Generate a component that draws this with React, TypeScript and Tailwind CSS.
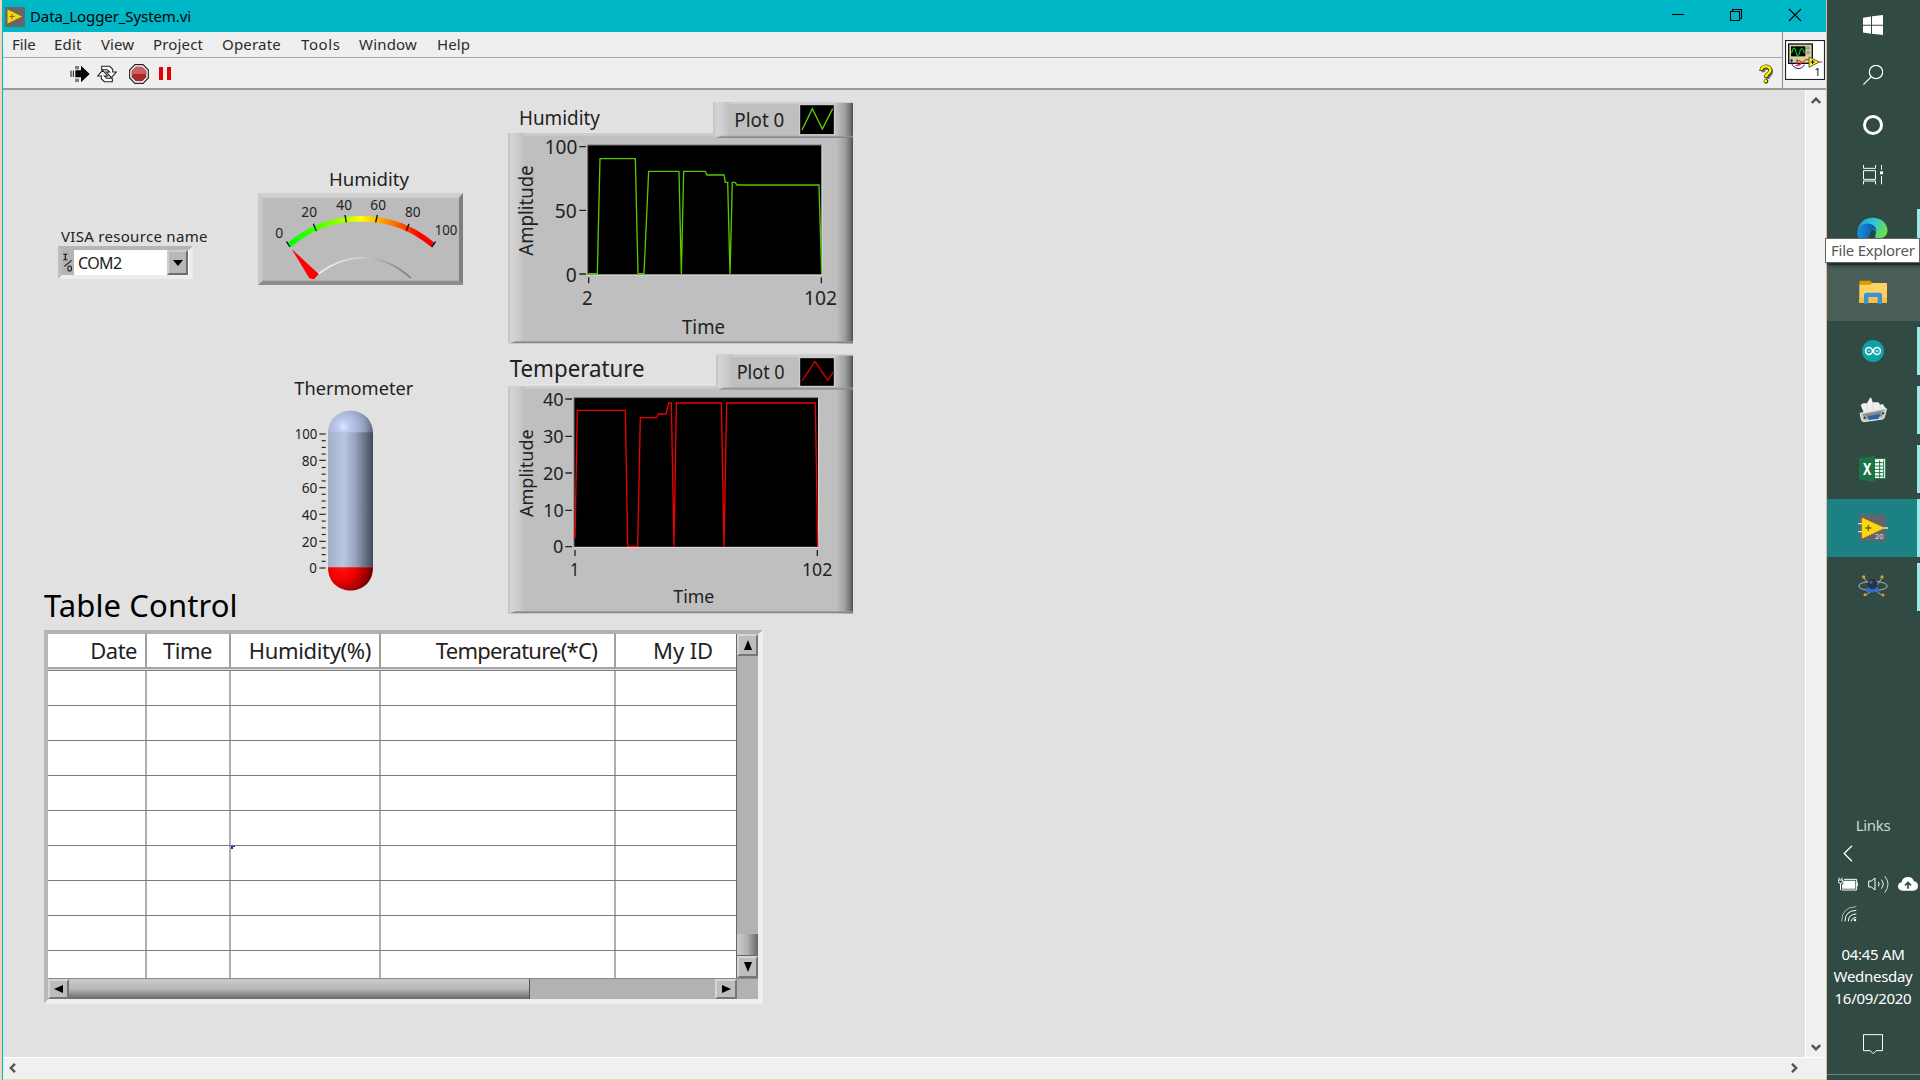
import React from "react";

const FONT = "font-['Noto_Sans','Open_Sans',sans-serif]";

type LabelProps = {
  x: number;
  y: number;
  w: number;
  size: number;
  children: string;
  rotate?: boolean;
  fill?: string;
};

/* Text on a drawing, fitted to a fixed advance width. x,y = left baseline. */
function Label({ x, y, w, size, children, rotate, fill = "#222" }: LabelProps) {
  return (
    <text
      x={x}
      y={y}
      fontSize={size}
      textLength={w}
      lengthAdjust="spacingAndGlyphs"
      fill={fill}
      transform={rotate ? `rotate(-90 ${x} ${y})` : undefined}
    >
      {children}
    </text>
  );
}

const MENU: { name: string; cls: string }[] = [
  { name: "File", cls: "w-[42px] tracking-[-0.1px]" },
  { name: "Edit", cls: "w-[47px] tracking-[0.2px]" },
  { name: "View", cls: "w-[52px] tracking-[0.1px]" },
  { name: "Project", cls: "w-[69px] tracking-[0.15px]" },
  { name: "Operate", cls: "w-[79px] tracking-[0.2px]" },
  { name: "Tools", cls: "w-[58px] tracking-[0.6px]" },
  { name: "Window", cls: "w-[78px] tracking-[0.2px]" },
  { name: "Help", cls: "w-[40px] tracking-[0.1px]" },
];

function TitleBar() {
  return (
    <header className="flex h-8 shrink-0 items-center bg-[#00b7c7] pl-[2px]">
      <svg className="mt-px h-5 w-5" viewBox="0 0 20 20">
        <rect width="20" height="20" fill="#666" />
        <path d="M2.5 2.5 17 9.5 2.5 16.5Z" fill="#ffd500" />
        <path d="M4.5 9.5h5M7 7v5" stroke="#666" strokeWidth="1.1" />
      </svg>
      <span className="ml-[5px] text-[15px] tracking-[-0.1px] text-black">Data_Logger_System.vi</span>
      <svg className="ml-auto mr-[22px] h-8 w-[132px]" viewBox="0 0 132 32" fill="none" stroke="#000" strokeWidth="1.1">
        <path d="M0 14.5h12" />
        <path d="M58.5 11.5h9v9h-9zM60.500 11.500v-2h9v9h-2" />
        <path d="m117 9 12 12M129 9l-12 12" />
      </svg>
    </header>
  );
}

function ViIcon() {
  return (
    <svg className="h-10 w-10" viewBox="435 118 120 120">
      <rect x="436.500" y="119.500" width="117" height="117" fill="#fff" stroke="#222" strokeWidth="3.500" />
      <rect x="446" y="130" width="71" height="58" fill="#d6d09c" stroke="#111" strokeWidth="4" />
      <rect x="453" y="137" width="43" height="30" fill="#000" />
      <path d="M455 158c4-20 10-20 13-4s8 12 11 0 9-16 14 4" fill="none" stroke="#00c832" strokeWidth="3.500" />
      <circle cx="504" cy="142" r="4" fill="none" stroke="#777" strokeWidth="2.500" />
      <circle cx="504" cy="156" r="4" fill="none" stroke="#777" strokeWidth="2.500" />
      <path d="M450 179h9M455 175v12M471 176v6" stroke="#1a1a99" strokeWidth="3" />
      <path d="M455 188c6 20 32 20 38 4" fill="none" stroke="#1a1a99" strokeWidth="3" />
      <circle cx="477" cy="186" r="6.500" fill="none" stroke="#e11" strokeWidth="3" />
      <path d="M466 195h10L497 177h12M538 184h9" fill="none" stroke="#e11" strokeWidth="3" />
      <path d="M507 169v31l31-16z" fill="#ffec1a" stroke="#444" strokeWidth="2.500" />
      <path d="M512 184h12M518 178v12" stroke="#111" strokeWidth="3" />
      <text x="523" y="227" fontSize="34" fill="#111">1</text>
    </svg>
  );
}

function Toolbar() {
  return (
    <div className="flex h-[58px] shrink-0 border-b-2 border-[#9a9a9a] bg-[#efefef]">
      <div className="flex flex-1 flex-col">
        <nav className="flex h-[26px] items-center border-b border-[#a8a8a8] pl-[9px] text-[15px] text-[#2c2c2c]">
          {MENU.map((m) => (
            <span key={m.name} className={m.cls + " pb-px"}>
              {m.name}
            </span>
          ))}
        </nav>
        <div className="flex flex-1 items-center pl-[67px] pt-px">
          <svg className="h-5 w-5" viewBox="210 192 60 60">
            <path d="M213 212v19M220 212v19" stroke="#111" strokeWidth="3" />
            <path d="M226 211h17v-14l26 25-26 25v-15h-17z" fill="#050505" />
            <path d="M228 198v10M234 198v10M228 236v10M234 236v10" stroke="#111" strokeWidth="3" />
          </svg>
          <svg className="ml-[7px] h-5 w-5" viewBox="289 192 60 60" fill="#fff" stroke="#222" strokeWidth="3.200">
            <path d="M303 199h24l9 9v8h11l-15 17-15-17h10l-7-7h-17z" />
            <path d="M335 245h-24l-9-9v-8h-11l15-17 15 17h-10l7 7h17z" />
          </svg>
          <svg className="ml-[12px] h-5 w-5" viewBox="386 192 60 60">
            <path d="M404 194h24l16 16v24l-16 16h-24l-16-16v-24z" fill="#fff" stroke="#222" strokeWidth="3.500" />
            <path d="M406 200h20l12 12v20l-12 12h-20l-12-12v-20z" fill="#a62c2c" />
            <path d="M406 200h20l12 12v10h-44v-10z" fill="#cc5f5f" />
          </svg>
          <div className="ml-[10px] flex gap-1">
            <i className="h-[13px] w-1 bg-[#e60000]" />
            <i className="h-[13px] w-1 bg-[#e60000]" />
          </div>
          <svg className="ml-auto mr-2 h-5 w-[15px]" viewBox="358 188 45 60">
            <path d="M367 210c0-20 27-16 24 0-1 8-10 8-10 20" transform="translate(3 3)" fill="none" stroke="#777" strokeWidth="12" />
            <path d="M365 209c0-19 29-17 27 0-1 8-13 9-13 20" fill="none" stroke="#3a3a00" strokeWidth="12.500" />
            <circle cx="379" cy="240" r="7" fill="#3a3a00" />
            <path d="M365 207c0-16 29-16 27 1-1 8-13 9-13 19" fill="none" stroke="#fff200" strokeWidth="7.500" />
            <circle cx="378" cy="239" r="4.500" fill="#fff200" />
          </svg>
        </div>
      </div>
      <div className="flex w-[44px] items-center justify-center border-l border-[#8d8d8d]">
        <ViIcon />
      </div>
    </div>
  );
}

function VisaControl() {
  return (
    <div className="absolute left-[55px] top-[135px] w-[160px]">
      <div className="ml-[3px] whitespace-nowrap text-[15px] leading-[22px] tracking-[0.3px] text-[#222]">VISA resource name</div>
      <div className="-mt-px flex h-[33px] w-[135px] border-4 border-b-[#ededed] border-l-[#bdbdbd] border-r-[#ededed] border-t-[#b5b5b5] bg-white">
        <div className="w-[12px] shrink-0 bg-[#b4b4b4]">
          <svg className="h-[25px] w-[12px]" viewBox="69 270 36 75" fill="none" stroke="#111" strokeWidth="3.200">
            <path d="M73 283h12M73 299h12M79 283v16M76 319l22-18" />
            <rect x="87" y="318" width="10" height="15" rx="4" />
          </svg>
        </div>
        <span className="flex-1 pl-1 text-[16px] leading-[27px] tracking-[-0.6px] text-[#222]">COM2</span>
        <div className="mr-px flex w-[21px] items-center justify-center border-2 border-b-[#6d6d6d] border-l-[#cfcfcf] border-r-[#6d6d6d] border-t-[#cfcfcf] bg-[#b8b8b8]">
          <i className="border-x-[5px] border-t-[6px] border-x-transparent border-t-black" />
        </div>
      </div>
    </div>
  );
}

function Gauge() {
  return (
    <svg className="absolute left-[252px] top-[76px] h-[120px] w-[212px]" viewBox="645 18 636 360">
      <defs>
        <linearGradient id="scale" gradientUnits="userSpaceOnUse" x1="745" y1="0" x2="1182" y2="0">
          <stop offset="0" stopColor="#00ff00" />
          <stop offset=".2" stopColor="#4fff00" />
          <stop offset=".4" stopColor="#b4ff00" />
          <stop offset=".5" stopColor="#ffff00" />
          <stop offset=".62" stopColor="#ffae00" />
          <stop offset=".8" stopColor="#ff4200" />
          <stop offset=".9" stopColor="#ff0000" />
        </linearGradient>
        <linearGradient id="rim" x1="0" x2="1">
          <stop offset="0" stopColor="#f4f4f4" />
          <stop offset=".45" stopColor="#cfcfcf" />
          <stop offset="1" stopColor="#777" />
        </linearGradient>
      </defs>
      <Label x={867} y={78} w={240} size={54}>Humidity</Label>
      <rect x="654" y="99" width="615" height="276" fill="#bbb" />
      <path d="M654 99h615l-12 14H668z" fill="#cfcfcf" />
      <path d="M654 99l14 14v248l-14 14z" fill="#cacaca" />
      <path d="M1269 99v276l-12-14V113z" fill="#808080" />
      <path d="M654 375h615l-12-13H668z" fill="#8c8c8c" />
      <path d="M748 255A334 334 0 0 1 1179 255" fill="none" stroke="url(#scale)" strokeWidth="16" />
      <path d="m739 244 11 17M820 191l9 22M915 165l4 22M1012 165l-5 22M1107 191l-8 22M1187 245l-12 16" stroke="#111" strokeWidth="4" />
      <Label x={706} y={235} w={24} size={44}>0</Label>
      <Label x={784} y={171} w={47} size={44}>20</Label>
      <Label x={889} y={149} w={47} size={44}>40</Label>
      <Label x={991} y={149} w={47} size={44}>60</Label>
      <Label x={1095} y={171} w={47} size={44}>80</Label>
      <Label x={1184} y={224} w={68} size={44}>100</Label>
      <path d="M836 341Q900 294 965 293Q1045 293 1112 354" fill="none" stroke="url(#rim)" strokeWidth="5" />
      <path d="M755 267 836 342 822 358 808 355Z" fill="#ff0000" />
    </svg>
  );
}

const TANK_LABELS = [
  { t: "100", y: 192, x: 74, w: 68 },
  { t: "80", y: 271, x: 95, w: 47 },
  { t: "60", y: 353, x: 95, w: 47 },
  { t: "40", y: 433, x: 95, w: 47 },
  { t: "20", y: 514, x: 95, w: 47 },
  { t: "0", y: 594, x: 118, w: 23 },
];

function Thermometer() {
  const minor: number[] = [];
  for (let i = 0; i < 5; i++) for (let k = 1; k < 4; k++) minor.push(192 + i * 80.4 + k * 20.1);
  return (
    <svg className="absolute left-[267px] top-[280px] h-[230px] w-[160px]" viewBox="0 0 480 690">
      <defs>
        <linearGradient id="tube" x1="0" x2="1">
          <stop offset="0" stopColor="#a3aec9" />
          <stop offset=".35" stopColor="#bac6e2" />
          <stop offset=".6" stopColor="#98a3bd" />
          <stop offset="1" stopColor="#444a5a" />
        </linearGradient>
        <radialGradient id="cap" gradientUnits="userSpaceOnUse" cx="220" cy="170" r="96">
          <stop offset="0" stopColor="#e2e9ff" />
          <stop offset=".15" stopColor="#c3cff3" />
          <stop offset=".45" stopColor="#aab6d8" />
          <stop offset=".7" stopColor="#8f99b6" />
          <stop offset="1" stopColor="#4d5466" />
        </radialGradient>
        <radialGradient id="bulb" gradientUnits="userSpaceOnUse" cx="215" cy="592" r="105">
          <stop offset="0" stopColor="#ff1212" />
          <stop offset=".4" stopColor="#ee0000" />
          <stop offset=".75" stopColor="#960000" />
          <stop offset="1" stopColor="#3c0000" />
        </radialGradient>
      </defs>
      <Label x={73} y={75} w={357} size={54}>Thermometer</Label>
      <path d="M174 190C176 100 307 100 309 190Z" fill="url(#cap)" />
      <rect x="174" y="187" width="135" height="406" fill="url(#tube)" />
      <path d="M174 592H309C309 685 174 685 174 592Z" fill="url(#bulb)" />
      {minor.map((y) => (
        <path key={y} d={`M155 ${y}h12`} stroke="#222" strokeWidth="3.500" />
      ))}
      {TANK_LABELS.map((l) => (
        <React.Fragment key={l.t}>
          <path d={`M148 ${l.y}h19`} stroke="#222" strokeWidth="3.500" />
          <Label x={l.x} y={l.y + 16} w={l.w} size={45}>{l.t}</Label>
        </React.Fragment>
      ))}
    </svg>
  );
}

function ChartDefs() {
  return (
    <svg className="absolute h-0 w-0">
      <defs>
        <linearGradient id="lightEdge" x1="0" x2="1">
          <stop offset="0" stopColor="#c2c2c2" />
          <stop offset=".2" stopColor="#d4d4d4" />
          <stop offset=".6" stopColor="#cecece" />
          <stop offset="1" stopColor="#bfbfbf" />
        </linearGradient>
        <linearGradient id="darkEdge" x1="0" x2="1">
          <stop offset="0" stopColor="#bfbfbf" />
          <stop offset=".5" stopColor="#a0a0a0" />
          <stop offset=".85" stopColor="#707070" />
          <stop offset="1" stopColor="#4c4c4c" />
        </linearGradient>
      </defs>
    </svg>
  );
}

function Raised({ x, y, w, h }: { x: number; y: number; w: number; h: number }) {
  return (
    <g>
      <rect x={x} y={y} width={w} height={h} fill="#bfbfbf" />
      <rect x={x} y={y} width={w} height="7" fill="#cdcdcd" />
      <rect x={x} y={y} width="48" height={h} fill="url(#lightEdge)" />
      <rect x={x + w - 50} y={y + 3} width="50" height={h - 3} fill="url(#darkEdge)" />
      <path d={`M${x + 20} ${y + h - 5}H${x + w}`} stroke="#999" strokeWidth="3" />
      <path d={`M${x + 10} ${y + h - 2}H${x + w}`} stroke="#808080" strokeWidth="3" />
    </g>
  );
}

function HumidityChart() {
  return (
    <svg className="absolute left-[497px] top-0 h-[260px] w-[370px]" viewBox="0 0 1110 780">
      <Label x={57} y={105} w={243} size={58}>Humidity</Label>
      <Raised x={24} y={130} w={1035} h={630} />
      <Raised x={640} y={36} w={419} h={108} />
      <Label x={703} y={112} w={150} size={59}>Plot 0</Label>
      <rect x="899" y="44" width="104" height="90" fill="#000" stroke="#ddd" strokeWidth="3" />
      <path d="M906 120 937 56 967 117 998 56" fill="none" stroke="#58d400" strokeWidth="4" />
      <rect x="263" y="165" width="702" height="389" fill="#000" />
      <path d="M263 555V165H966" fill="none" stroke="#777" strokeWidth="3" />
      <path d="M263 555H966V165" fill="none" stroke="#dedede" strokeWidth="3" />
      <path d="M238 170h20M238 361h20M238 552h20M266 562v18M964 562v18" stroke="#222" strokeWidth="4" />
      <path
        d="M265 551H292L300 206H406L414 551H432L446 244H537L544 553L551 244H616L621 255H672L676 277H683L690 553L697 277H705L711 285H957L965 553"
        fill="none"
        stroke="#58c800"
        strokeWidth="4"
      />
      <Label x={134} y={193} w={98} size={58}>100</Label>
      <Label x={164} y={384} w={66} size={58}>50</Label>
      <Label x={197} y={576} w={33} size={58}>0</Label>
      <Label x={246} y={644} w={32} size={58}>2</Label>
      <Label x={912} y={644} w={99} size={58}>102</Label>
      <Label x={546} y={731} w={129} size={58}>Time</Label>
      <Label x={100} y={497} w={271} size={58} rotate>Amplitude</Label>
    </svg>
  );
}

function TemperatureChart() {
  return (
    <svg className="absolute left-[497px] top-[255px] h-[275px] w-[370px]" viewBox="0 0 1110 825">
      <Label x={29} y={97} w={405} size={69}>Temperature</Label>
      <Raised x={24} y={124} w={1035} h={681} />
      <Raised x={648} y={29} w={411} h={105} />
      <Label x={710} y={101} w={144} size={58}>Plot 0</Label>
      <rect x="899" y="38" width="104" height="86" fill="#000" stroke="#ddd" strokeWidth="3" />
      <path d="M906 108 945 49 983 106 999 82" fill="none" stroke="#e00000" strokeWidth="4" />
      <rect x="222" y="158" width="733" height="448" fill="#000" />
      <path d="M222 607V158H955" fill="none" stroke="#777" strokeWidth="3" />
      <path d="M222 607H956V158" fill="none" stroke="#dedede" strokeWidth="3" />
      <path
        d="M196 162h20M196 274h20M196 384h20M196 496h20M196 605h20M225 615v18M952 615v18"
        stroke="#222"
        strokeWidth="4"
      />
      <path
        d="M225 580L232 196H376L383 604H413L421 218H470L475 207H498L506 174H514L522 606L529 174H664L672 606L680 174H946L953 606"
        fill="none"
        stroke="#ee0000"
        strokeWidth="4"
      />
      <Label x={129} y={182} w={62} size={56}>40</Label>
      <Label x={129} y={294} w={62} size={56}>30</Label>
      <Label x={129} y={404} w={62} size={56}>20</Label>
      <Label x={130} y={516} w={61} size={56}>10</Label>
      <Label x={159} y={625} w={31} size={56}>0</Label>
      <Label x={210} y={692} w={28} size={56}>1</Label>
      <Label x={906} y={692} w={91} size={56}>102</Label>
      <Label x={520} y={775} w={123} size={56}>Time</Label>
      <Label x={100} y={516} w={263} size={56} rotate>Amplitude</Label>
    </svg>
  );
}

const COLUMNS = [
  { name: "Date", cls: "pr-[8px] tracking-[-0.5px]" },
  { name: "Time", cls: "pr-[17px] tracking-[-0.5px]" },
  { name: "Humidity(%)", cls: "pr-[8px] tracking-[-0.35px]" },
  { name: "Temperature(*C)", cls: "pr-[17px] tracking-[-0.75px]" },
  { name: "My ID", cls: "pr-[23px] tracking-[-0.1px]" },
];

const BUTTON =
  "flex shrink-0 items-center justify-center border-2 border-t-[#d6d6d6] border-l-[#d6d6d6] border-r-[#777] border-b-[#777] bg-[#bdbdbd]";

function TableControl() {
  return (
    <div className="absolute left-[41px] top-[490px]">
      <div className="whitespace-nowrap text-[31px] leading-[50px] tracking-[0.1px] text-black">
        <span>Table Control</span>
      </div>
      <div className="flex h-[374px] w-[719px] flex-col border-4 border-b-[5px] border-r-[5px] border-b-[#eee] border-l-[#b7b7b7] border-r-[#eee] border-t-[#b2b2b2] bg-[#b2b2b2]">
        <div className="flex h-[344px]">
          <div className="w-[688px] overflow-hidden bg-white">
            <div className="grid h-[35px] grid-cols-[99px_84px_150px_235px_120px] border-b-2 border-[#a5a5a5] text-[22px] leading-[33px] text-[#222]">
              {COLUMNS.map((c) => (
                <div key={c.name} className="border-r-2 border-[#a0a0a0] text-right last:border-r-0">
                  <div className={c.cls + " whitespace-nowrap"}>{c.name}</div>
                </div>
              ))}
            </div>
            <div className="h-[2px] border-b border-[#808080] bg-[#dcdcdc]" />
            {Array.from({ length: 9 }, (_, r) => (
              <div key={r} className="grid h-[35px] grid-cols-[99px_84px_150px_235px_120px] border-b border-[#7b7b7b]">
                {COLUMNS.map((c, i) => (
                  <div key={c.name} className="border-r-2 border-[#b0b0b0] last:border-r-0">
                    {r === 5 && i === 2 && <div className="h-[3px] w-1 border-l-2 border-t border-[#2222dd]" />}
                  </div>
                ))}
              </div>
            ))}
          </div>
          <div className="flex w-[22px] flex-col border-l border-[#666]">
            <div className={BUTTON + " h-[22px]"}>
              <i className="border-x-[4.5px] border-b-[10px] border-x-transparent border-b-black" />
            </div>
            <div className="flex-1" />
            <div className="h-[22px] border-b border-[#666] bg-linear-to-r from-[#cccccc] via-[#b0b0b0] to-[#666]" />
            <div className={BUTTON + " h-[22px]"}>
              <i className="border-x-[4.5px] border-t-[10px] border-x-transparent border-t-black" />
            </div>
          </div>
        </div>
        <div className="flex h-[21px] border-t border-[#888]">
          <div className={BUTTON + " w-[21px]"}>
            <i className="border-y-[4.5px] border-r-[9px] border-y-transparent border-r-black" />
          </div>
          <div className="w-[461px] border-r border-[#555] bg-linear-to-b from-[#cacaca] via-[#b8b8b8] to-[#686868]" />
          <div className="flex-1" />
          <div className={BUTTON + " mr-[21px] w-[22px]"}>
            <i className="border-y-[4.5px] border-l-[9px] border-y-transparent border-l-black" />
          </div>
        </div>
      </div>
    </div>
  );
}

function Chevron({ cls }: { cls: string }) {
  return (
    <svg className={"h-[10px] w-[10px] " + cls} viewBox="0 0 10 10" fill="none" stroke="#555" strokeWidth="2.400">
      <path d="M.8 7 5 2.800 9.200 7" />
    </svg>
  );
}

function LabViewWindow() {
  return (
    <div className="flex w-[1826px] flex-col">
      <TitleBar />
      <div className="flex flex-1 flex-col">
        <Toolbar />
        <div className="flex h-[967px]">
          <main className="relative flex-1 overflow-hidden bg-[#e1e1e1]">
            <ChartDefs />
            <VisaControl />
            <Gauge />
            <Thermometer />
            <HumidityChart />
            <TemperatureChart />
            <TableControl />
          </main>
          <div className="flex w-[21px] flex-col items-center justify-between border-l border-white bg-[#f0f0f0] pb-[5px] pr-px pt-[6px]">
            <Chevron cls="" />
            <Chevron cls="rotate-180" />
          </div>
        </div>
        <div className="flex h-[22px] items-center justify-between border-t border-white bg-[#f0f0f0] pb-[2px] pl-[5px] pr-[27px]">
          <Chevron cls="-rotate-90" />
          <Chevron cls="rotate-90" />
        </div>
      </div>
      <div className="h-px bg-[#ecd9b8]" />
    </div>
  );
}

function Indicator({ cls }: { cls: string }) {
  return <i className={"absolute right-0 w-[3px] bg-[#9be8e8] " + cls} />;
}

function Taskbar() {
  return (
    <aside className="relative flex w-[94px] flex-col items-stretch border-l border-[#d9bf94] bg-[#314a43] text-[15px] text-white">
      <div className="flex h-[50px] items-center justify-center pr-[2px]">
        <svg className="h-5 w-5" viewBox="669 44 60 60" fill="#fff">
          <path d="M669 52l24-3.500V73H669zM696 48l33-4v29H696zM669 76h24v24l-24-3.500zM696 76h33v28l-33-4z" />
        </svg>
      </div>
      <div className="flex h-[50px] items-center justify-center pr-[2px]">
        <svg className="h-5 w-5" viewBox="669 195 60 60" fill="none" stroke="#fff" strokeWidth="3.500">
          <circle cx="708" cy="216" r="20" />
          <path d="m694 230-24 24" />
        </svg>
      </div>
      <div className="flex h-[50px] items-center justify-center pr-[2px]">
        <i className="h-5 w-5 rounded-full border-[3px] border-white" />
      </div>
      <div className="flex h-[50px] items-center justify-center pb-px pr-[2px]">
        <svg className="h-5 w-5" viewBox="669 494 60 60" fill="none" stroke="#fff" strokeWidth="3">
          <path d="M670.500 494v10h36v-10M670.500 552v-10h36v10M670.500 511h36v26h-36zM724.500 494v14M724.500 527v25" />
          <rect x="720" y="513" width="9" height="9" fill="#fff" stroke="none" />
        </svg>
      </div>
      <div className="relative flex h-[65px] items-start justify-center pr-[2px] pt-[17px]">
        <svg className="h-[31px] w-[31px]" viewBox="0 0 31 31">
          <defs>
            <linearGradient id="edgeTop" x1="0" x2="1" y1=".2" y2=".6">
              <stop offset="0" stopColor="#1e9fe0" />
              <stop offset=".5" stopColor="#35c6d3" />
              <stop offset="1" stopColor="#6ddf43" />
            </linearGradient>
            <linearGradient id="edgeLow" x1="0" x2="1">
              <stop offset="0" stopColor="#1791e2" />
              <stop offset="1" stopColor="#0c50a0" />
            </linearGradient>
          </defs>
          <path d="M.5 14C2 5 8 .7 15.500 .7 24 .7 30.500 6 30.500 13.500c0 4-3 7.500-7 7.500H13L11 8z" fill="url(#edgeTop)" />
          <path d="M.3 16C.8 10 5 6.500 10.500 6.500c5 0 8.500 3 9 7-1-1-2.500-1.300-4-.8-3 1-4.500 4-3.500 8l3 8C6 30 .3 23 .3 16z" fill="url(#edgeLow)" />
          <path d="M19 14.500c-1-2.500-5-2-6 .5s-1 5 0 8h6.500c-2.500-3-.5-5-.5-8.500z" fill="#26474a" />
        </svg>
        <Indicator cls="top-[9px] h-12" />
      </div>
      <div className="flex h-[56px] items-center justify-center bg-[#485e56] pb-[3px] pr-[2px]">
        <svg className="h-[24px] w-[28px]" viewBox="657 838 84 72">
          <path d="M658 852v-9q0-3 3-3h30l5 7v9z" fill="#dd9900" />
          <path d="M658 852h32l8-5h43v59h-83z" fill="#ffd160" />
          <path d="M658 890h83v16h-83z" fill="#f9c13e" />
          <path d="M672 909v-26q0-7 7-7h40q7 0 7 7v26h-13v-20h-28v20z" fill="#3793df" />
        </svg>
      </div>
      <div className="relative flex h-[59px] items-center justify-center pr-[2px]">
        <svg className="h-[22px] w-[22px]" viewBox="0 0 22 22">
          <circle cx="11" cy="11" r="11" fill="#10a0a8" />
          <g fill="none" stroke="#fff" strokeWidth="1.500">
            <circle cx="7" cy="11" r="3.400" />
            <circle cx="15" cy="11" r="3.400" />
          </g>
          <path d="M5.700 11h2.600M13.700 11h2.600M15 9.700v2.600" stroke="#fff" strokeWidth=".8" />
        </svg>
        <Indicator cls="top-[6px] h-12" />
      </div>
      <div className="relative flex h-[59px] items-center justify-center pr-[2px]">
        <svg className="h-[26px] w-[28px]" viewBox="177 260 84 78">
          <path d="M210 262h4l4 14h17l5 7 9-2 8 15-66 10-9-22 8-5h11z" fill="#f0f0f0" />
          <path d="M198 279 204 300M238 279l4 20M219 276v24" stroke="#cfcfcf" strokeWidth="2" />
          <path d="M180 309 256 293q4 0 3 5l-6 23q-1 4-5 5l-56 8q-5 0-7-4z" fill="#c6c8cc" stroke="#ececec" strokeWidth="3" />
          <path d="M188 312 251 300l-4 18-52 10z" fill="#85898f" />
          <path d="M203 318 240 310l-4 15-29 4z" fill="#2b64a4" />
          <circle cx="194" cy="322" r="5" fill="#333" stroke="#eee" strokeWidth="2" />
          <circle cx="249" cy="309" r="5" fill="#333" stroke="#eee" strokeWidth="2" />
        </svg>
        <Indicator cls="top-[6px] h-12" />
      </div>
      <div className="relative flex h-[60px] items-center justify-center pb-px pr-[2px]">
        <svg className="h-[26px] w-[28px]" viewBox="177 437 84 78">
          <path d="M222 445h35v60h-35z" fill="#fff" stroke="#1c7343" strokeWidth="3" />
          <path d="M225 457h24M225 467h24M225 477h24M225 487h24M225 497h24M239 450v52M251 450v52" stroke="#1c7343" strokeWidth="3" />
          <path d="m177 444 48-8v80l-48-9z" fill="#1c7343" />
          <text x="189" y="493" fontSize="46" fontWeight="700" fill="#fff" textLength="25" lengthAdjust="spacingAndGlyphs">X</text>
        </svg>
        <Indicator cls="top-[6px] h-12" />
      </div>
      <div className="relative flex h-[58px] items-center justify-center bg-[#1b8182] pr-[2px]">
        <svg className="h-[28px] w-[30px]" viewBox="174 611 90 84">
          <rect x="178" y="612" width="79" height="81" fill="#646569" />
          <path d="M174 640h14M174 664h14M248 653h16" stroke="#ddd" strokeWidth="4" />
          <path d="M187 624v59l64-30z" fill="#ffd60a" stroke="#ffd60a" strokeWidth="3" strokeLinejoin="round" />
          <path d="M196 653h18M205 644v18" stroke="#6b6530" strokeWidth="4" />
          <text x="225" y="686" fontSize="22" fill="#e5e5e5">20</text>
        </svg>
        <Indicator cls="inset-y-0" />
      </div>
      <div className="relative flex h-[59px] items-center justify-center pb-px pr-[2px]">
        <svg className="h-[24px] w-[30px]" viewBox="174 795 90 70">
          <g fill="none" stroke="#a9b2b5" strokeWidth="3">
            <ellipse cx="219" cy="830" rx="43" ry="14" />
            <path d="M191 804C196 816 240 858 249 858M246 803C242 820 205 856 196 857" />
          </g>
          <path d="M202 834h32l4 16q-10-6-19 0-10-6-21 0z" fill="#2f6bd0" />
          <circle cx="217" cy="825" r="15" fill="#26304c" />
          <circle cx="213" cy="819" r="5" fill="#4d5c80" />
          <g fill="#e39a35">
            <circle cx="191" cy="803" r="5" />
            <circle cx="246" cy="803" r="5" />
            <circle cx="195" cy="856" r="4.500" />
            <circle cx="249" cy="857" r="4.500" />
          </g>
        </svg>
        <Indicator cls="top-[6px] h-12" />
      </div>
      <div className="mt-auto flex h-[265px] flex-col">
        <div className="pr-px text-center text-[15px] leading-5 tracking-[-0.3px] text-[#d0d6d4]">Links</div>
        <svg className="ml-[16px] mt-[10px] h-[17px] w-[10px]" viewBox="0 0 10 17" fill="none" stroke="#fff" strokeWidth="1.300">
          <path d="M9 .8 1.200 8.500 9 16.200" />
        </svg>
        <div className="mt-[12px] flex h-[20px] items-center pl-[11px]">
          <svg className="h-[14px] w-5 shrink-0" viewBox="174 230 60 42" fill="none" stroke="#fff" strokeWidth="3">
            <path d="M177 232v6M186 232v6M175 239h13v5q0 5-6.500 5t-6.500-5zM181.500 249v20M192 237h38v32h-45M232 246v12" />
            <path d="M190 241h36v24h-40v-12q4-2 4-6z" fill="#fff" stroke="none" />
          </svg>
          <svg className="ml-[10px] h-[18px] w-[21px] shrink-0" viewBox="263 225 63 54" fill="none" stroke="#fff" strokeWidth="3">
            <path d="M265 243h8l11-9v36l-11-9h-8z" />
            <path d="M294 246q5 6 0 13M303 239q11 13 0 27" />
            <path d="M313 228q20 24 0 50" strokeOpacity=".8" />
          </svg>
          <svg className="ml-[9px] h-[14px] w-[20px] shrink-0" viewBox="354 231 60 42">
            <path d="M368 272q-14-1-14-13 0-10 11-13 3-15 19-15 14 0 18 13 12 2 12 14 0 13-14 14z" fill="#fff" />
            <path d="M384 266v-16M375 256l9-9 9 9" fill="none" stroke="#314a43" strokeWidth="5" />
          </svg>
        </div>
        <svg className="ml-[14px] mt-[12px] h-[16px] w-[16px]" viewBox="182 320 48 48" fill="none" stroke="#fff" strokeWidth="3">
          <path d="M184 366Q184 323 228 322" strokeOpacity=".6" />
          <path d="M194 366Q194 334 228 333M204 366Q204 345 228 344" />
          <path d="M213 366Q214 355 228 354" />
          <circle cx="224" cy="362" r="4" fill="#fff" stroke="none" />
        </svg>
        <div className="mt-[21px] whitespace-nowrap pr-px text-center text-[15px] leading-[22px] tracking-[-0.3px]">
          <div>04:45 AM</div>
          <div>Wednesday</div>
          <div>16/09/2020</div>
        </div>
        <div className="mt-[25px] flex justify-center pr-[2px]">
          <svg className="h-[20px] w-[20px]" viewBox="249 701 60 60" fill="none" stroke="#fff" strokeWidth="3">
            <path d="M250.500 703h57v48h-19l-9 9-9-9h-20z" />
          </svg>
        </div>
        <div className="mb-[5px] mt-auto h-px bg-[#6f827c]" />
      </div>
      <div className="absolute right-0 top-[238px] h-[25px] w-[95px] whitespace-nowrap border border-[#666] bg-white pl-[5px] text-[15px] leading-[23px] tracking-[-0.25px] text-[#575757] shadow-[3px_3px_3px_rgba(0,0,0,0.4)]">
        File Explorer
      </div>
    </aside>
  );
}

export default function App() {
  return (
    <div className={"flex h-[1080px] w-[1920px] overflow-hidden border-l-2 border-[#ecd9b8] " + FONT}>
      <div className="flex w-[1824px] shrink-0 border-l border-[#00b7c7]">
        <LabViewWindow />
      </div>
      <Taskbar />
    </div>
  );
}
